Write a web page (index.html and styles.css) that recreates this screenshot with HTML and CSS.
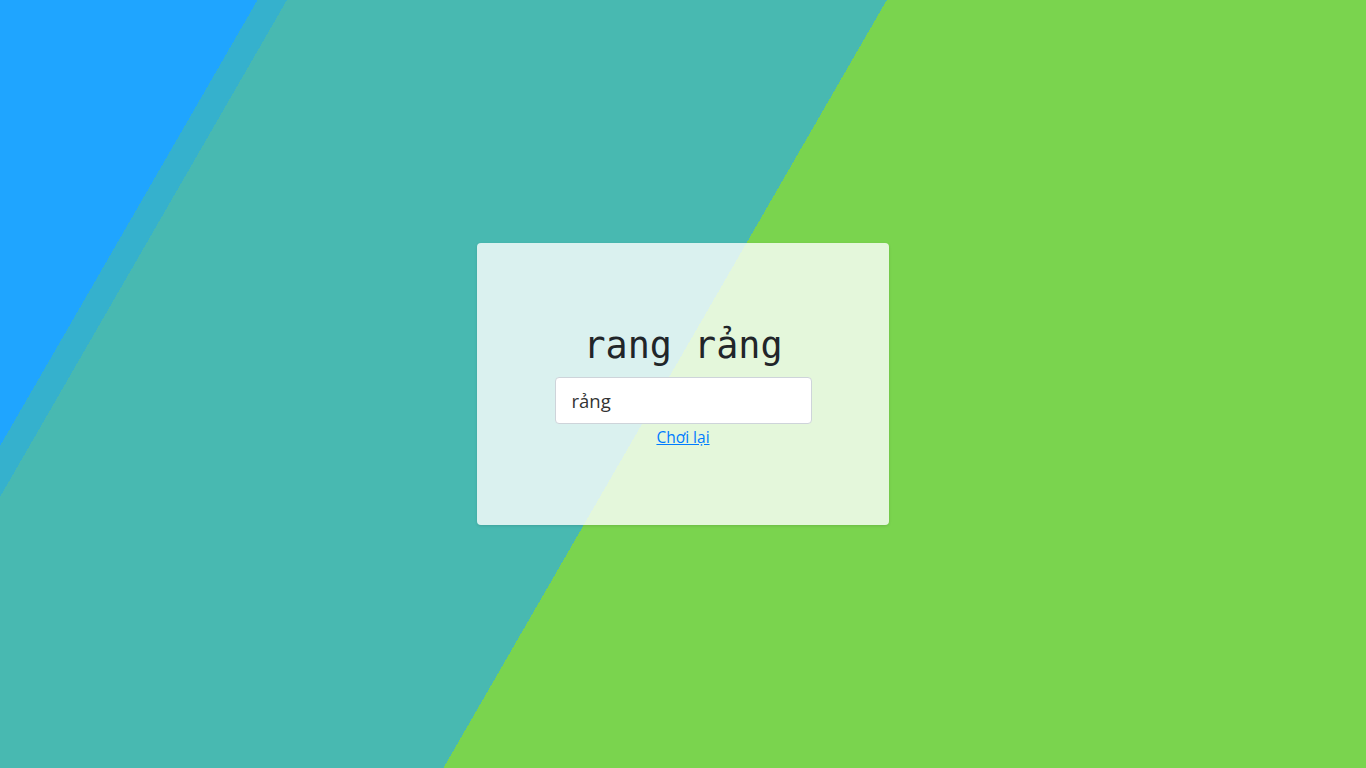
FILE: index.html
```html
<!DOCTYPE html>
<html lang="vi">
<head>
<meta charset="utf-8">
<title>rang rảng</title>
<link rel="stylesheet" href="styles.css">
</head>
<body>
<main class="stage">
  <section class="card">
    <h1 class="word">rang rảng</h1>
    <input class="answer" type="text" value="rảng">
    <a class="replay" href="#">Chơi lại</a>
  </section>
</main>
</body>
</html>
```
FILE: styles.css
```css
html, body {
  margin: 0;
  padding: 0;
  height: 100%;
}
body {
  font-family: "Open Sans", "Noto Sans", sans-serif;
  background: linear-gradient(120deg,
    #1fa5ff 0, #1fa5ff 223px,
    #35b1cd 223px, #35b1cd 248.5px,
    #48b9b1 248.5px, #48b9b1 768px,
    #7ad44e 768px, #7ad44e 100%);
}
.stage {
  height: 100vh;
  display: flex;
  align-items: center;
  justify-content: center;
}
.card {
  box-sizing: border-box;
  width: 412px;
  height: 282px;
  background: rgba(255, 255, 255, 0.8);
  border-radius: 4px;
  box-shadow: 0 1px 3px rgba(0, 0, 0, 0.12);
  display: flex;
  flex-direction: column;
  align-items: center;
  justify-content: center;
  padding-top: 4px;
}
.word {
  margin: 0 0 10px;
  font-family: "DejaVu Sans Mono", "Liberation Mono", monospace;
  font-weight: 400;
  font-size: 36.75px;
  line-height: 43px;
  color: #212529;
}
.answer {
  box-sizing: border-box;
  width: 257px;
  height: 47px;
  margin: 0;
  padding: 1px 16px 0;
  border: 1px solid #ced4da;
  border-radius: 4px;
  background: #fff;
  font-family: "Open Sans", "Noto Sans", sans-serif;
  font-size: 18.5px;
  color: #333;
  outline: none;
}
.replay {
  margin-top: 1px;
  font-size: 15.5px;
  line-height: 24px;
  color: #007bff;
  text-decoration: underline;
}
```
